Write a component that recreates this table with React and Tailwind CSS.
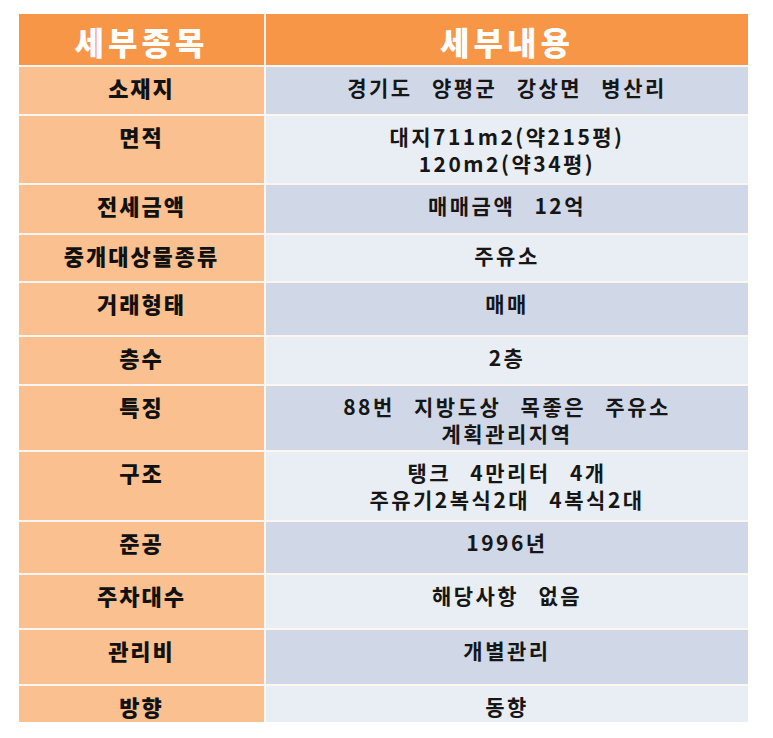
import React from "react";

const rows = [
  { label: "소재지", lines: ["경기도 양평군 강상면 병산리"], h: "h-[47px]", dark: true },
  { label: "면적", lines: ["대지711m2(약215평)", "120m2(약34평)"], h: "h-[67px]", dark: false },
  { label: "전세금액", lines: ["매매금액 12억"], h: "h-[48px]", dark: true },
  { label: "중개대상물종류", lines: ["주유소"], h: "h-[46px]", dark: false },
  { label: "거래형태", lines: ["매매"], h: "h-[52px]", dark: true },
  { label: "층수", lines: ["2층"], h: "h-[47px]", dark: false },
  { label: "특징", lines: ["88번 지방도상 목좋은 주유소", "계획관리지역"], h: "h-[64px]", dark: true },
  { label: "구조", lines: ["탱크 4만리터 4개", "주유기2복식2대 4복식2대"], h: "h-[68px]", dark: false },
  { label: "준공", lines: ["1996년"], h: "h-[51px]", dark: true },
  { label: "주차대수", lines: ["해당사항 없음"], h: "h-[53px]", dark: false },
  { label: "관리비", lines: ["개별관리"], h: "h-[54px]", dark: true },
  { label: "방향", lines: ["동향"], h: "h-[36px]", dark: false },
];

const font = "font-['Noto_Sans_CJK_KR','Noto_Sans',sans-serif]";

const Row = ({ row }) => {
  return (
    <div className={`grid grid-cols-[245px_482px] gap-[2px] ${row.h}`}>
      <div className="bg-[#fac08f] pt-[7px] text-center text-[22px] leading-[27px] font-black tracking-[2px] text-[#111]">
        {row.label}
      </div>
      <div
        className={`${row.dark ? "bg-[#d0d8e8]" : "bg-[#e9edf4]"} pt-[7px] text-center text-[21px] leading-[27px] font-bold tracking-[2.5px] [word-spacing:12px] text-[#161616]`}
      >
        {row.lines.map((line, i) => (
          <div key={i} className="h-[27px]">
            {line}
          </div>
        ))}
      </div>
    </div>
  );
};

export default function App() {
  return (
    <div className={`min-h-[738px] w-[773px] bg-white pt-[14px] pl-[19px] ${font}`}>
      <div className="flex w-[729px] flex-col gap-[2px] bg-[#fdf6f0]">
        <div className="grid h-[51px] grid-cols-[245px_482px] gap-[2px]">
          <div className="flex items-center justify-center bg-[#f79646] pt-[2px] text-[32px] font-black tracking-[4px] text-white">
            세부종목
          </div>
          <div className="flex items-center justify-center bg-[#f79646] pt-[2px] text-[32px] font-black tracking-[4px] text-white">
            세부내용
          </div>
        </div>
        {rows.map((row) => (
          <Row key={row.label} row={row} />
        ))}
      </div>
    </div>
  );
}
